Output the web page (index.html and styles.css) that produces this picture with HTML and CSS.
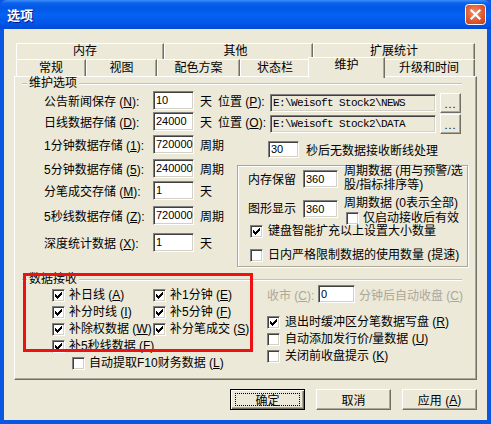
FILE: index.html
```html
<!DOCTYPE html>
<html lang="zh">
<head>
    <meta charset="UTF-8">
    <link rel="stylesheet" href="styles.css">
</head>
<body>
<div class="window">
    <div class="titlebar">
        <span class="title">选项</span>
        <span class="close">
            <svg width="21" height="21" viewBox="0 0 21 21">
                <defs>
                    <radialGradient id="cg" cx="0.45" cy="0.4" r="0.75">
                        <stop offset="0" stop-color="#F2906F"/>
                        <stop offset="0.55" stop-color="#E35B31"/>
                        <stop offset="1" stop-color="#C23E17"/>
                    </radialGradient>
                </defs>
                <rect x="0.5" y="0.5" width="20" height="20" rx="3" fill="url(#cg)" stroke="#fff"/>
                <path d="M6.5 6.5 L14.5 14.5 M14.5 6.5 L6.5 14.5" stroke="#fff" stroke-width="2.2" stroke-linecap="square"/>
            </svg>
        </span>
    </div>

    <div class="client">
        <div class="tabs">
            <div class="tab-row back">
                <div class="tab">内存</div>
                <div class="tab">其他</div>
                <div class="tab">扩展统计</div>
            </div>
            <div class="tab-row front">
                <div class="tab">常规</div>
                <div class="tab">视图</div>
                <div class="tab">配色方案</div>
                <div class="tab">状态栏</div>
                <div class="tab on">维护</div>
                <div class="tab">升级和时间</div>
            </div>
        </div>

        <div class="panel">
            <div class="group-title"><span>维护选项</span></div>

            <div class="row r1">
                <span class="lbl">公告新闻保存 (<u>N</u>):</span>
                <span class="field">10</span>
                <span class="unit">天</span>
                <span class="loc">位置 (<u>P</u>):</span>
                <span class="field path">E:\Weisoft Stock2\NEWS</span>
                <span class="dots">...</span>
            </div>
            <div class="row r2">
                <span class="lbl">日线数据存储 (<u>D</u>):</span>
                <span class="field">24000</span>
                <span class="unit">天</span>
                <span class="loc">位置 (<u>O</u>):</span>
                <span class="field path">E:\Weisoft Stock2\DATA</span>
                <span class="dots">...</span>
            </div>
            <div class="row r3">
                <span class="lbl">1分钟数据存储 (<u>1</u>):</span>
                <span class="field">720000</span>
                <span class="unit wide">周期</span>
                <span class="field sec">30</span>
                <span class="sec-text">秒后无数据接收断线处理</span>
            </div>

            <div class="split">
                <div class="left-rows">
                    <div class="row r4">
                        <span class="lbl">5分钟数据存储 (<u>5</u>):</span>
                        <span class="field">240000</span>
                        <span class="unit">周期</span>
                    </div>
                    <div class="row r5">
                        <span class="lbl">分笔成交存储 (<u>M</u>):</span>
                        <span class="field">1</span>
                        <span class="unit">天</span>
                    </div>
                    <div class="row r6">
                        <span class="lbl">5秒线数据存储 (<u>Z</u>):</span>
                        <span class="field">720000</span>
                        <span class="unit">周期</span>
                    </div>
                    <div class="row r7">
                        <span class="lbl">深度统计数据 (<u>X</u>):</span>
                        <span class="field">1</span>
                        <span class="unit">天</span>
                    </div>
                </div>

                <div class="mem-box">
                    <div class="mem-row">
                        <span class="mlbl">内存保留</span>
                        <span class="field m">360</span>
                        <span class="mtxt">周期数据 (用与预警/选<br>股/指标排序等)</span>
                    </div>
                    <div class="mem-row b">
                        <span class="mlbl">图形显示</span>
                        <span class="field m">360</span>
                        <div class="mtxt2">
                            <div>周期数据 (0表示全部)</div>
                            <div class="check inline"><span class="cb"></span><span>仅启动接收后有效</span></div>
                        </div>
                    </div>
                    <div class="check c1"><span class="cb"><svg width="7" height="7" viewBox="0 0 7 7"><path d="M0 2h1v1h1v1h1v-1h1v-1h1v-1h1v-1h1v3h-1v1h-1v1h-1v1h-1v1h-1v-1h-1v-1h-1z"/></svg></span><span>键盘智能扩充以上设置大小数量</span></div>
                    <div class="check c2"><span class="cb"></span><span>日内严格限制数据的使用数量 (提速)</span></div>
                </div>
            </div>

            <div class="recv-wrap">
                <div class="group-title"><span>数据接收</span></div>
                <div class="recv">
                    <div class="recv-left">
                        <div class="recv-grid">
                            <div class="check"><span class="cb"><svg width="7" height="7" viewBox="0 0 7 7"><path d="M0 2h1v1h1v1h1v-1h1v-1h1v-1h1v-1h1v3h-1v1h-1v1h-1v1h-1v1h-1v-1h-1v-1h-1z"/></svg></span><span>补日线 (<u>A</u>)</span></div>
                            <div class="check"><span class="cb"><svg width="7" height="7" viewBox="0 0 7 7"><path d="M0 2h1v1h1v1h1v-1h1v-1h1v-1h1v-1h1v3h-1v1h-1v1h-1v1h-1v1h-1v-1h-1v-1h-1z"/></svg></span><span>补1分钟 (<u>E</u>)</span></div>
                            <div class="check"><span class="cb"><svg width="7" height="7" viewBox="0 0 7 7"><path d="M0 2h1v1h1v1h1v-1h1v-1h1v-1h1v-1h1v3h-1v1h-1v1h-1v1h-1v1h-1v-1h-1v-1h-1z"/></svg></span><span>补分时线 (<u>I</u>)</span></div>
                            <div class="check"><span class="cb"><svg width="7" height="7" viewBox="0 0 7 7"><path d="M0 2h1v1h1v1h1v-1h1v-1h1v-1h1v-1h1v3h-1v1h-1v1h-1v1h-1v1h-1v-1h-1v-1h-1z"/></svg></span><span>补5分钟 (<u>F</u>)</span></div>
                            <div class="check"><span class="cb"><svg width="7" height="7" viewBox="0 0 7 7"><path d="M0 2h1v1h1v1h1v-1h1v-1h1v-1h1v-1h1v3h-1v1h-1v1h-1v1h-1v1h-1v-1h-1v-1h-1z"/></svg></span><span>补除权数据 (<u>W</u>)</span></div>
                            <div class="check"><span class="cb"><svg width="7" height="7" viewBox="0 0 7 7"><path d="M0 2h1v1h1v1h1v-1h1v-1h1v-1h1v-1h1v3h-1v1h-1v1h-1v1h-1v1h-1v-1h-1v-1h-1z"/></svg></span><span>补分笔成交 (<u>S</u>)</span></div>
                            <div class="check"><span class="cb"><svg width="7" height="7" viewBox="0 0 7 7"><path d="M0 2h1v1h1v1h1v-1h1v-1h1v-1h1v-1h1v3h-1v1h-1v1h-1v1h-1v1h-1v-1h-1v-1h-1z"/></svg></span><span>补5秒线数据 (<u>F</u>)</span></div>
                            <div></div>
                            <div class="check f10"><span class="cb"></span><span>自动提取F10财务数据 (<u>L</u>)</span></div>
                        </div>
                    </div>
                    <div class="recv-right">
                        <div class="close-row">
                            <span class="close-lbl">收市 (<u>C</u>):</span>
                            <span class="field c">0</span>
                            <span class="close-txt">分钟后自动收盘 (<u>C</u>)</span>
                        </div>
                        <div class="check r-first"><span class="cb"><svg width="7" height="7" viewBox="0 0 7 7"><path d="M0 2h1v1h1v1h1v-1h1v-1h1v-1h1v-1h1v3h-1v1h-1v1h-1v1h-1v1h-1v-1h-1v-1h-1z"/></svg></span><span>退出时缓冲区分笔数据写盘 (<u>R</u>)</span></div>
                        <div class="check"><span class="cb"></span><span>自动添加发行价/量数据 (<u>U</u>)</span></div>
                        <div class="check"><span class="cb"></span><span>关闭前收盘提示 (<u>K</u>)</span></div>
                    </div>
                </div>
                <div class="mark"></div>
            </div>
        </div>

        <div class="buttons">
            <span class="button default">确定</span>
            <span class="button">取消</span>
            <span class="button">应用 (<u>A</u>)</span>
        </div>
    </div>
</div>
</body>
</html>
```

FILE: styles.css
```css
html, body {
    margin: 0;
    height: 100%;
}

body {
    background: #0A5AE6;
    font: 12px "Liberation Sans", "Noto Sans CJK SC", sans-serif;
    color: #000;
}

u { text-decoration: underline; text-underline-offset: 1px; }

.window {
    width: 491px;
    height: 424px;
    display: flex;
    flex-direction: column;
    background: #0A57E2;
}

/* 标题栏 */
.titlebar {
    height: 29px;
    flex: none;
    display: flex;
    align-items: center;
    padding: 0 5px 0 7px;
    border-radius: 7px 7px 0 0;
    background: linear-gradient(to bottom, #3D8FF8 0, #0C62EC 3px, #0058E6 8px, #0562F2 15px, #0056E8 23px, #0249D6 29px);
}

.title {
    flex: 1;
    color: #fff;
    font-weight: bold;
    font-size: 13px;
    text-shadow: 1px 1px #0A1883;
}

.close {
    width: 21px;
    height: 21px;
    display: flex;
}

.client {
    flex: 1;
    margin: 0 4px 4px;
    padding: 14px 10px 0;
    background: #ECE9D8;
}

/* 选项卡 */
.tabs { margin: 0 2px; }

.tab-row {
    display: flex;
    align-items: flex-start;
    height: 16px;
}
.tab-row.front { height: 17px; }

.tab {
    box-sizing: border-box;
    height: 100%;
    flex: none;
    border-top: 1px solid #fff;
    border-left: 1px solid #fff;
    border-right: 1px solid #716F64;
    box-shadow: inset -1px 0 #ACA899;
    background: #ECE9D8;
    text-align: center;
    line-height: 15px;
    white-space: nowrap;
}

.back .tab:nth-child(1) { width: 148px; padding-right: 10px; }
.back .tab:nth-child(2) { width: 149px; padding-right: 6px; }
.back .tab:nth-child(3) { width: 162px; }

.front .tab { line-height: 16px; }
.front .tab:nth-child(1) { width: 70px; }
.front .tab:nth-child(2) { width: 71px; }
.front .tab:nth-child(3) { width: 83px; }
.front .tab:nth-child(4) { width: 70px; }
.front .tab:nth-child(5) { width: 77px; }
.front .tab:nth-child(6) { width: 92px; }

.tab.on {
    height: 21px;
    margin: -2px -2px 0;
    position: relative;
    z-index: 1;
    line-height: 14px;
}

.panel {
    position: relative;
    height: 304px;
    box-sizing: border-box;
    border: 1px solid;
    border-color: #fff #716F64 #716F64 #fff;
    box-shadow: inset -1px -1px #ACA899;
    padding: 0 14px 0 7px;
}

/* 分组标题 */
.group-title {
    display: flex;
    align-items: center;
    height: 12px;
    line-height: 12px;
}
.group-title::before,
.group-title::after {
    content: "";
    height: 0;
    border-top: 1px solid #C5C2B2;
    border-bottom: 1px solid #fff;
    margin-top: 2px;
}
.group-title::before { width: 5px; margin-right: 2px; }
.group-title::after { flex: 1; margin-left: 2px; }

.row {
    display: flex;
    align-items: center;
    height: 19px;
    padding-left: 22px;
    white-space: nowrap;
}
.r1 { margin-top: 2px; }
.r2 { margin-top: 2px; }
.r3 { margin-top: 4px; }
.r4 { margin-top: 0; }
.r5 { margin-top: 3px; }
.r6 { margin-top: 6px; }
.r7 { margin-top: 8px; }

.lbl {
    width: 109px;
    flex: none;
}

.field {
    box-sizing: border-box;
    width: 41px;
    height: 19px;
    flex: none;
    background: #fff;
    border: 1px solid;
    border-color: #808080 #fff #fff #808080;
    box-shadow: inset 1px 1px #404040, inset -1px -1px #D4D0C8;
    padding-left: 2px;
    font: 11px "Liberation Sans", sans-serif;
    line-height: 17px;
    overflow: hidden;
    white-space: nowrap;
}

.unit { margin-left: 6px; }
.unit.wide { width: 24px; flex: none; }

.loc {
    width: 52px;
    flex: none;
    margin-left: 6px;
}

.field.path {
    width: 166px;
    height: 18px;
    margin-top: 4px;
    background: #ECE9D8;
    font: 11px "Liberation Mono", monospace;
    letter-spacing: -0.6px;
    line-height: 16px;
}

.dots {
    box-sizing: border-box;
    width: 21px;
    height: 20px;
    margin: 4px 0 0 4px;
    border: 1px solid;
    border-color: #fff #716F64 #716F64 #fff;
    box-shadow: inset -1px -1px #ACA899;
    font: 11px "Liberation Sans", sans-serif;
    text-align: center;
    line-height: 20px;
    letter-spacing: 1px;
}

.field.sec {
    width: 31px;
    height: 17px;
    margin: 10px 0 0 44px;
    line-height: 15px;
}

.sec-text {
    margin: 10px 0 0 7px;
}

.split {
    display: flex;
    margin-top: 5px;
}

.left-rows {
    width: 215px;
    flex: none;
}

/* 内存保留框 */
.mem-box {
    box-sizing: border-box;
    width: 231px;
    height: 102px;
    flex: none;
    margin: 6px -6px 0 0;
    padding: 1px 0 0 10px;
    border: 1px solid #ACA899;
    box-shadow: inset 1px 1px #fff, 1px 1px #fff;
    white-space: nowrap;
}

.mem-row {
    display: flex;
    align-items: center;
    height: 23px;
}
.mlbl { width: 48px; flex: none; }
.field.m {
    width: 35px;
    height: 18px;
    margin-left: 7px;
    line-height: 16px;
}
.mtxt {
    margin-left: 6px;
    line-height: 13.5px;
}

.mem-row.b {
    align-items: flex-start;
    height: 28px;
    margin-top: 7px;
}
.mem-row.b .mlbl { line-height: 18px; margin-top: 3px; }
.mem-row.b .field.m { margin-top: 3px; }
.mtxt2 {
    margin-left: 6px;
    line-height: 12px;
}

/* 复选框 */
.check {
    display: flex;
    align-items: center;
    gap: 4px;
    height: 17px;
    line-height: 13px;
    white-space: nowrap;
}
.check.inline {
    height: 13px;
    margin: 3px 0 0 2px;
}
.mem-box .c1, .mem-box .c2 {
    height: 13px;
    margin-left: 2px;
    gap: 5px;
}
.mem-box .c1 { margin-top: 0; }
.mem-box .c2 { margin-top: 11px; }

.cb {
    box-sizing: border-box;
    width: 13px;
    height: 13px;
    flex: none;
    display: flex;
    align-items: center;
    justify-content: center;
    background: #fff;
    border: 1px solid;
    border-color: #808080 #fff #fff #808080;
    box-shadow: inset 1px 1px #404040, inset -1px -1px #D4D0C8;
}
.cb svg { display: block; fill: #000; }

/* 数据接收 */
.recv-wrap {
    position: relative;
    margin-top: 6px;
}

.recv { display: flex; }

.recv-left {
    width: 244px;
    flex: none;
    box-sizing: border-box;
    padding-left: 30px;
    margin-top: 2px;
}

.recv-grid {
    display: grid;
    grid-template-columns: 101px auto;
    grid-auto-rows: 17px;
}
.recv-grid .f10 {
    grid-column: 1 / -1;
    padding-left: 20px;
}

.recv-right {
    flex: 1;
    padding-left: 1px;
}

.close-row {
    display: flex;
    align-items: center;
    height: 18px;
    color: #ACA899;
    white-space: nowrap;
}
.close-lbl { width: 51px; flex: none; }
.field.c {
    width: 37px;
    height: 18px;
    line-height: 16px;
    color: #000;
}
.close-txt { margin-left: 4px; }

.recv-right .check { gap: 5px; }
.recv-right .r-first { margin-top: 11px; }

.mark {
    position: absolute;
    left: 1px;
    top: 0;
    width: 230px;
    height: 79px;
    box-sizing: border-box;
    border: 3px solid #EE1111;
}

/* 底部按钮 */
.buttons {
    display: flex;
    justify-content: flex-end;
    gap: 11px;
    margin-top: 9px;
}

.button {
    position: relative;
    box-sizing: border-box;
    width: 75px;
    height: 21px;
    display: flex;
    align-items: center;
    justify-content: center;
    border: 1px solid;
    border-color: #fff #716F64 #716F64 #fff;
    box-shadow: inset -1px -1px #ACA899;
}

.button.default {
    border-color: #000;
    box-shadow: inset 1px 1px #fff, inset -1px -1px #716F64, inset -2px -2px #ACA899;
}
.button.default::after {
    content: "";
    position: absolute;
    inset: 3px 4px;
    border: 1px dotted #000;
}
```
